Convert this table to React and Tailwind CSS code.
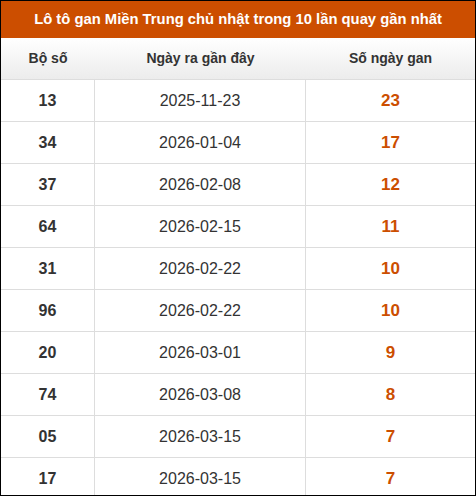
import React from "react";

const rows = [
  ["13", "2025-11-23", "23"],
  ["34", "2026-01-04", "17"],
  ["37", "2026-02-08", "12"],
  ["64", "2026-02-15", "11"],
  ["31", "2026-02-22", "10"],
  ["96", "2026-02-22", "10"],
  ["20", "2026-03-01", "9"],
  ["74", "2026-03-08", "8"],
  ["05", "2026-03-15", "7"],
  ["17", "2026-03-15", "7"],
];

export default function App() {
  return (
    <div
      className="w-[476px] h-[496px] border border-black overflow-hidden bg-white text-[#333]"
      style={{ fontFamily: '"Liberation Sans", Arial, sans-serif' }}
    >
      <div className="h-[37px] bg-[#cc4e00] text-white font-bold text-[14.8px] flex items-center justify-center">
        Lô tô gan Miền Trung chủ nhật trong 10 lần quay gần nhất
      </div>
      <div className="h-[42px] grid grid-cols-[94px_211px_1fr] border-b border-[#ddd] bg-gradient-to-b from-white to-[#ececec] text-[14px] font-bold text-[#333]">
        <div className="flex items-center justify-center">Bộ số</div>
        <div className="flex items-center justify-center">Ngày ra gần đây</div>
        <div className="flex items-center justify-center">Số ngày gan</div>
      </div>
      {rows.map(([n, d, g], i) => (
        <div
          key={i}
          className="h-[42px] grid grid-cols-[94px_211px_1fr] border-b border-[#ddd]"
        >
          <div className="flex items-center justify-center border-r border-[#ddd] font-bold text-[16px] text-[#333]">
            {n}
          </div>
          <div className="flex items-center justify-center border-r border-[#ddd] text-[16px] text-[#333]">
            {d}
          </div>
          <div className="flex items-center justify-center font-bold text-[17px] text-[#cc4e00]">
            {g}
          </div>
        </div>
      ))}
    </div>
  );
}
